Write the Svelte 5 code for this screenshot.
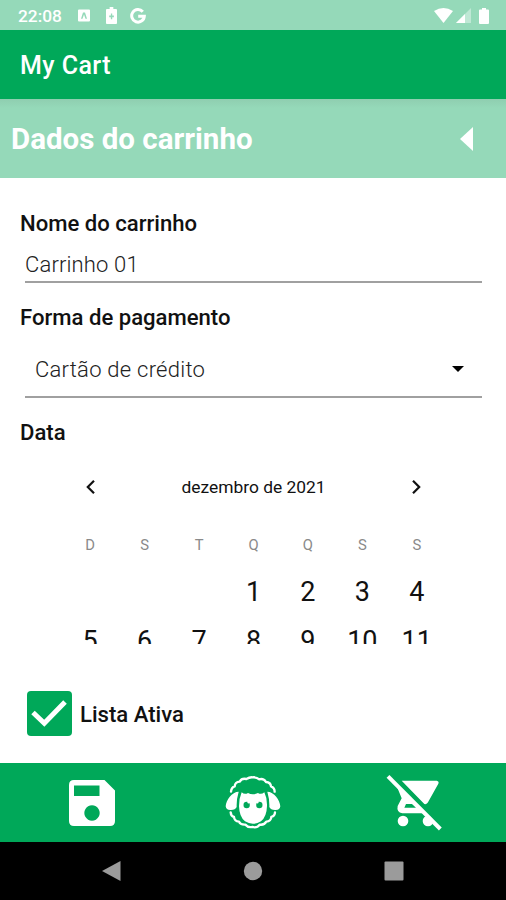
<script lang="ts">
  let cartName = $state("Carrinho 01");
  let payment = $state("Cartão de crédito");
  let active = $state(true);
  let open = $state(true);

  const weekdays = ["D", "S", "T", "Q", "Q", "S", "S"];
  // dezembro de 2021 starts on a Wednesday; two weeks fit in the view
  const offset = 3;
  const days = [...Array(offset).fill(""), ...Array.from({ length: 11 }, (_, i) => i + 1)];
</script>

<div class="screen">
  <div class="status">
    <span class="clock">22:08</span>
    <svg class="s-app" viewBox="0 0 12 12" width="12" height="13"><path fill="#fff" fill-rule="evenodd" d="M1 0h10q1 0 1 1v10q0 1-1 1H1q-1 0-1-1V1q0-1 1-1zM5 3 3 9.200h1.500L6 5l1.500 4.200H9L7 3z" /></svg>
    <svg class="s-bat" viewBox="0 0 12 17" width="11" height="17" preserveAspectRatio="none"><path fill="#fff" fill-rule="evenodd" d="M4 0h4v2h3q1 0 1 1v13q0 1-1 1H1q-1 0-1-1V3q0-1 1-1h3zM5.300 6.500v2H3.500v1.700h1.800v2h1.500v-2h1.800V8.500H6.800v-2z" /></svg>
    <svg class="s-g" viewBox="0 0 16 16" width="16" height="16"><path fill="none" stroke="#fff" stroke-width="3" d="M12.800 3.700A6.300 6.300 0 1 0 14.300 8.300H8.200" /></svg>
    <div class="right">
      <svg viewBox="0 0 19 15" width="19" height="15"><path fill="#fff" d="M0 3Q9.500-3 19 3L9.500 15z" /></svg>
      <svg class="s-sig" viewBox="0 0 15 15" width="15" height="15"><path fill="#fff" opacity=".4" d="M15 0v15H0z" /><path fill="#fff" d="M9 6v9H0z" /></svg>
      <svg class="s-full" viewBox="0 0 10 16" width="10" height="16"><path fill="#fff" d="M3 0h4v1.500h2q1 0 1 1V15q0 1-1 1H1q-1 0-1-1V2.500q0-1 1-1h2z" /></svg>
    </div>
  </div>

  <header>My Cart</header>

  <button class="section" onclick={() => (open = !open)}>
    <span>Dados do carrinho</span>
    <svg viewBox="0 0 13 24" width="13" height="24"><path fill="#fff" d="M13 0v24L0 12z" /></svg>
  </button>

  <main>
    {#if open}
      <label class="title" for="name">Nome do carrinho</label>
      <input id="name" class="name" bind:value={cartName} />
      <div class="title pay">Forma de pagamento</div>
      <div class="select">
        <span>{payment}</span>
        <svg viewBox="0 0 12 6" width="12" height="6"><path d="M0 0h12L6 6z" /></svg>
      </div>
      <div class="title date">Data</div>

      <div class="calendar">
        <div class="month">
          <svg viewBox="0 0 9 14" width="9" height="14"><path d="M8 .8 1.800 7 8 13.200" /></svg>
          <span>dezembro de 2021</span>
          <svg viewBox="0 0 9 14" width="9" height="14"><path d="M1 .8 7.200 7 1 13.200" /></svg>
        </div>
        <div class="grid week">
          {#each weekdays as w}<span>{w}</span>{/each}
        </div>
        <div class="grid days">
          {#each days as d}<span>{d}</span>{/each}
        </div>
      </div>

      <button class="check" onclick={() => (active = !active)}>
        <span class="box" class:off={!active}>
          <svg viewBox="0 0 44 44" width="44" height="44"><path d="M6 21.500 17.300 32.300 38 11" /></svg>
        </span>
        <span>Lista Ativa</span>
      </button>
    {/if}
  </main>

  <div class="tabs">
    <svg viewBox="0 0 46 46" width="46" height="46"><path fill="#fff" fill-rule="evenodd" d="M5 0h30.500L46 10.500V41q0 5-5 5H5q-5 0-5-5V5q0-5 5-5zM5 5.500V16h25.500V5.500zM23 25.300a7.700 7.700 0 1 0 .01 0z" /></svg>
    <!-- sheep -->
    <svg viewBox="47 60 168 160" width="56" height="53.300">
      <g fill="none" stroke="#fff" stroke-width="7" stroke-linecap="round" stroke-linejoin="round">
        <path d="M65 107q1-13 11-16 1-13 15-14 6-11 20-8 10-6 19-5 13-1 19 6 14-4 21 8 14 1 15 13 11 4 11 16" />
        <path d="M64 169q1 12 10 14 1 13 15 14 4 10 19 9 9 10 21 7 14 4 22-7 14 2 20-9 14-1 15-14 11-3 11-14" />
      </g>
      <path fill="#fff" d="M88 107C68 107 50 132 49 151q1 12 16 11 13 0 17-9-1-22 6-46zM174 107c20 0 38 25 39 44q-1 12-16 11-13 0-17-9 1-22-6-46z" />
      <path fill="#fff" d="M97 109q9 8 19 2 14 8 30 0 10 6 19-2 9 18 8 42-1 32-18 45-25 15-48 0-17-13-18-45 0-24 8-42z" />
      <g fill="#00a859"><circle cx="112" cy="147" r="9.500" /><circle cx="150" cy="147" r="9.500" /></g>
      <g fill="#fff"><circle cx="118" cy="139" r="3.500" /><circle cx="144" cy="139" r="3.500" /></g>
    </svg>
    <svg viewBox="48 60 168 171" width="56" height="57">
      <path fill="#fff" d="M95 80H200q8 2 5 9L174 145q-3 7-11 5z" />
      <path fill="#fff" fill-rule="evenodd" d="M80 96 95 133 83 156q-4 19 14 22H170L143 150zM103 161 108 150H126L138 161z" />
      <circle cx="99" cy="201" r="16" fill="#fff" /><circle cx="174" cy="201" r="16" fill="#fff" />
      <path d="M61 60 216 214" stroke="#00a859" stroke-width="12" />
      <path d="M54 67 211 225" stroke="#fff" stroke-width="12" />
    </svg>
  </div>

  <nav>
    <svg viewBox="0 0 20 20" width="20" height="20"><path d="M18.500 0v20L0 10z" /></svg>
    <svg viewBox="0 0 20 20" width="20" height="20"><circle cx="10" cy="10" r="9.200" /></svg>
    <svg viewBox="0 0 20 20" width="20" height="20"><rect x=".5" y=".5" width="19" height="19" rx="1" /></svg>
  </nav>
</div>

<style>
  .screen { width: 506px; height: 900px; display: flex; flex-direction: column; overflow: hidden; background: #fff; color: #111; font-family: Roboto, "Liberation Sans", sans-serif; }
  button { border: 0; background: none; font: inherit; color: inherit; text-align: left; }
  svg { display: block; flex: none; }

  .status { height: 30px; flex: none; box-sizing: border-box; padding: 1px 17px 0 18px; display: flex; align-items: center; background: #95d9b9; color: #fff; }
  .clock { width: 60px; font-size: 17.300px; font-weight: 500; }
  .s-bat { margin-left: 16px; }
  .s-g { margin-left: 13px; }
  .right { margin-left: auto; display: flex; align-items: center; }
  .s-sig { margin-left: 3px; }
  .s-full { margin-left: 8px; }

  header { height: 69px; flex: none; box-sizing: border-box; padding: 2px 20px 0; display: flex; align-items: center; background: #00a859; color: #fff; font-size: 25px; font-weight: 500; letter-spacing: .45px; }
  .section { height: 79px; flex: none; padding: 1px 33px 0 11px; display: flex; align-items: center; justify-content: space-between; background: linear-gradient(#8fceb0, #95d9b9 9px); color: #fff; font-size: 29.500px; font-weight: 700; }

  main { flex: 1; min-height: 0; padding: 32px 24px 0 20px; display: flex; flex-direction: column; }
  .title { padding-bottom: 2px; line-height: 26px; font-size: 22.100px; font-weight: 500; }
  .name { margin: 0 0 0 5px; padding: 10px 0 0; height: 45px; box-sizing: border-box; border: 0; border-bottom: 2px solid #a0a0a0; outline: 0; font: 300 22px Roboto, "Liberation Sans", sans-serif; letter-spacing: .15px; color: #222; background: none; }
  .pay { margin-top: 21px; }
  .select { height: 66px; box-sizing: border-box; margin-left: 5px; padding: 10px 18px 0 10px; display: flex; align-items: center; justify-content: space-between; border-bottom: 2px solid #a0a0a0; font-size: 22px; font-weight: 300; letter-spacing: .25px; color: #222; }
  .date { margin-top: 21px; }

  .calendar { width: 381px; height: 197px; margin-left: 43px; flex: none; overflow: hidden; }
  .month { height: 84px; box-sizing: border-box; padding: 0 23px 4px; display: flex; align-items: center; justify-content: space-between; font-size: 17.400px; }
  .month path { fill: none; stroke: #111; stroke-width: 2.200; }
  .grid { display: grid; grid-template-columns: repeat(7, 1fr); text-align: center; }
  .week { line-height: 28px; font-size: 14.800px; color: #8a8a8a; }
  .days { padding-top: 8px; grid-auto-rows: 49px; line-height: 50px; font-size: 27px; }

  .check { align-self: flex-start; margin: 47px 0 0 -1px; padding: 0 0 0 8px; display: flex; align-items: center; gap: 8px; font-size: 22.100px; font-weight: 500; }
  .box { width: 45px; height: 45px; border-radius: 4px; background: #00a859; }
  .box.off { background: #aaa; }
  .box path { fill: none; stroke: #fff; stroke-width: 5; }

  .tabs { height: 79px; flex: none; padding: 0 11px; display: grid; grid-template-columns: repeat(3, 1fr); align-items: center; justify-items: center; background: #00a859; }
  nav { height: 58px; flex: none; padding: 0 42px; display: grid; grid-template-columns: repeat(3, 1fr); align-items: center; justify-items: center; background: #000; }
  nav svg { fill: #9b9b9b; }
</style>
